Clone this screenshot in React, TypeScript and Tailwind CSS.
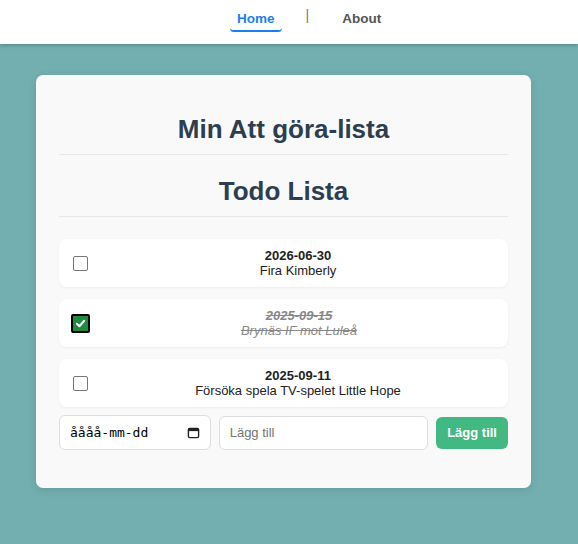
import React from "react";

const Box = ({ checked }: { checked: boolean }) =>
  checked ? (
    <span className="ml-[12px] flex h-[19px] w-[19px] shrink-0 items-center justify-center rounded-[2px] border-2 border-black bg-[#1f8b3c]">
      <svg width="11" height="11" viewBox="0 0 12 12">
        <path d="M2 6.3 L4.8 9 L10 3" fill="none" stroke="white" strokeWidth="2.2" strokeLinecap="round" strokeLinejoin="round" />
      </svg>
    </span>
  ) : (
    <span className="ml-[14px] block h-[15px] w-[15px] shrink-0 rounded-[2px] border border-[#767676] bg-white" />
  );

const items = [
  { date: "2026-06-30", text: "Fira Kimberly", done: false },
  { date: "2025-09-15", text: "Brynäs IF mot Luleå", done: true },
  { date: "2025-09-11", text: "Försöka spela TV-spelet Little Hope", done: false },
];

export default function App() {
  return (
    <div className="min-h-[544px] bg-[#73afb0] font-['Liberation_Sans',Arial,sans-serif]">
      <nav className="flex h-[44px] items-start bg-white pl-[230px] shadow-[0_2px_3px_rgba(0,0,0,0.18)]">
        <a className="mt-[11px] rounded-[4px] border-b-2 border-[#1a7ff0] px-[7px] pb-[3px] text-[13.5px] font-bold leading-[16px] text-[#1a7ff0]">
          Home
        </a>
        <span className="ml-[24px] mr-[26px] mt-[7px] text-[14px] leading-[16px] text-[#777]">|</span>
        <a className="mt-[11px] px-[7px] text-[13.5px] font-bold leading-[16px] text-[#555]">About</a>
      </nav>
      <div className="ml-[36px] mt-[31px] w-[495px] rounded-[7px] bg-[#f9f9f9] px-[23px] pb-[38px] pt-[39px] shadow-[0_2px_8px_rgba(0,0,0,0.12)]">
        <h1 className="border-b border-[#e6e6e6] pb-[10px] text-center text-[26px] font-bold leading-[30px] text-[#2c3e50]">
          Min Att göra-lista
        </h1>
        <h2 className="mt-[21px] border-b border-[#e6e6e6] pb-[10px] text-center text-[26px] font-bold leading-[30px] text-[#2c3e50]">
          Todo Lista
        </h2>
        <div className="mt-[22px] flex flex-col gap-[12px]">
          {items.map((it) => (
            <div key={it.date} className="flex h-[48px] items-center rounded-[8px] bg-white shadow-[0_1px_3px_rgba(0,0,0,0.05)]">
              <Box checked={it.done} />
              <div
                className={
                  "flex-1 text-center text-[13px] leading-[15px] " +
                  (it.done ? "italic text-[#888] line-through" : "text-[#222]")
                }
              >
                <div className="font-bold">{it.date}</div>
                <div>{it.text}</div>
              </div>
            </div>
          ))}
        </div>
        <div className="mt-[8px] flex items-center gap-[8px]">
          <div className="flex h-[35px] w-[152px] items-center justify-between rounded-[6px] border border-[#ddd] bg-white pl-[10px] pr-[10px] font-['DejaVu_Sans_Mono',monospace] text-[13px] text-black">
            <span>åååå-mm-dd</span>
            <svg width="13" height="13" viewBox="0 0 14 14">
              <rect x="1.5" y="2.5" width="11" height="10" rx="1.5" fill="none" stroke="#222" strokeWidth="1.5" />
              <rect x="1.5" y="2.5" width="11" height="3" fill="#222" />
            </svg>
          </div>
          <div className="flex h-[34px] w-[210px] items-center rounded-[6px] border border-[#ddd] bg-white pl-[10px] text-[13px] text-[#757575]">
            Lägg till
          </div>
          <button className="h-[32px] w-[72px] rounded-[6px] bg-[#42b983] text-[13px] font-bold text-white">
            Lägg till
          </button>
        </div>
      </div>
    </div>
  );
}
